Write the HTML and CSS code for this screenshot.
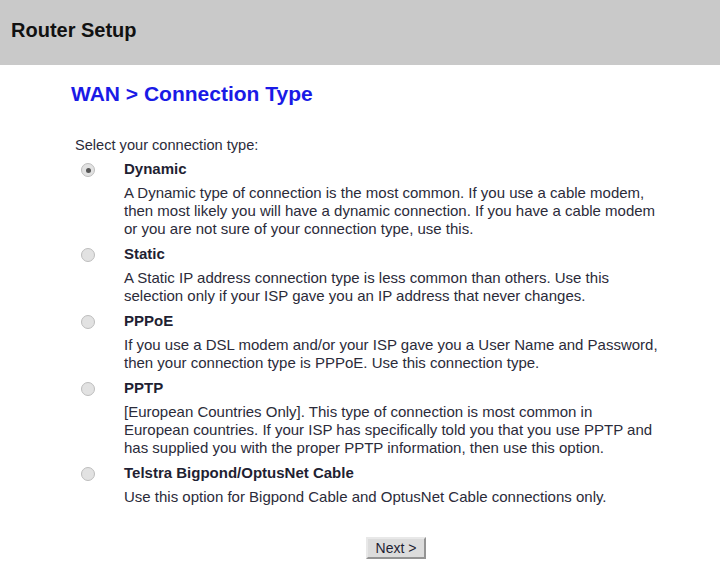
FILE: index.html
```html
<!DOCTYPE html>
<html lang="en">
<head>
  <meta charset="UTF-8" />
  <title>Router Setup</title>
  <link rel="stylesheet" href="styles.css">
</head>
<body>
  <div class="topbar">Router Setup</div>

  <h1>WAN &gt; Connection Type</h1>

  <form id="formWan" class="wan">
    <p class="intro">Select your connection type:</p>

    <div class="options">
      <input type="radio" name="conn" id="dynamic" checked />
      <label for="dynamic">Dynamic</label>
      <p class="desc">A Dynamic type of connection is the most common. If you use a cable modem, then most likely you will have a dynamic connection. If you have a cable modem or you are not sure of your connection type, use this.</p>

      <input type="radio" name="conn" id="static" />
      <label for="static">Static</label>
      <p class="desc">A Static IP address connection type is less common than others. Use this selection only if your ISP gave you an IP address that never changes.</p>

      <input type="radio" name="conn" id="pppoe" />
      <label for="pppoe">PPPoE</label>
      <p class="desc">If you use a DSL modem and/or your ISP gave you a User Name and Password, then your connection type is PPPoE. Use this connection type.</p>

      <input type="radio" name="conn" id="pptp" />
      <label for="pptp">PPTP</label>
      <p class="desc">[European Countries Only]. This type of connection is most common in European countries. If your ISP has specifically told you that you use PPTP and has supplied you with the proper PPTP information, then use this option.</p>

      <input type="radio" name="conn" id="telstra" />
      <label for="telstra">Telstra Bigpond/OptusNet Cable</label>
      <p class="desc">Use this option for Bigpond Cable and OptusNet Cable connections only.</p>
    </div>

    <div class="actions">
      <button type="submit">Next &gt;</button>
    </div>
  </form>
</body>
</html>
```

FILE: styles.css
```css
body {
  font-family: "Liberation Sans", Arial, sans-serif;
  margin: 0;
  background-color: white;
  color: #2b2b3a;
}

.topbar {
  background-color: #c9c9c9;
  height: 65px;
  box-sizing: border-box;
  padding: 19px 0 0 11px;
  font-size: 20px;
  font-weight: bold;
  color: #111;
}

h1 {
  color: #1a1ae6;
  font-size: 21px;
  line-height: 24px;
  margin: 17px 0 0 71px;
}

.wan {
  padding-left: 75px;
  width: 585px;
  font-size: 15px;
}

.intro {
  margin: 30px 0 0 0;
  line-height: 18px;
  font-size: 14.6px;
}

.options {
  display: grid;
  grid-template-columns: 49px 1fr;
  margin-top: 6px;
}

.options input {
  grid-column: 1;
  appearance: none;
  width: 14px;
  height: 14px;
  margin: 3px 0 0 6px;
  border: 1px solid #bdbdbd;
  border-radius: 50%;
  background-color: #e2e2e2;
  box-sizing: border-box;
  display: grid;
  place-content: center;
}

.options input:checked::before {
  content: "";
  width: 5px;
  height: 5px;
  border-radius: 50%;
  background-color: #555;
}

.options label {
  grid-column: 2;
  font-weight: bold;
  line-height: 18px;
  color: #1f1f33;
}

.desc {
  grid-column: 2;
  margin: 6px 0 7px 0;
  line-height: 18px;
}

.actions {
  margin-top: 24px;
  padding-left: 291px;
}

button {
  font-family: "Liberation Sans", Arial, sans-serif;
  font-size: 14px;
  width: 60px;
  height: 22px;
  padding: 0;
  background-color: #dcdcdc;
  border: 2px outset #e8e8e8;
  color: #1f1f33;
  cursor: pointer;
}
```
